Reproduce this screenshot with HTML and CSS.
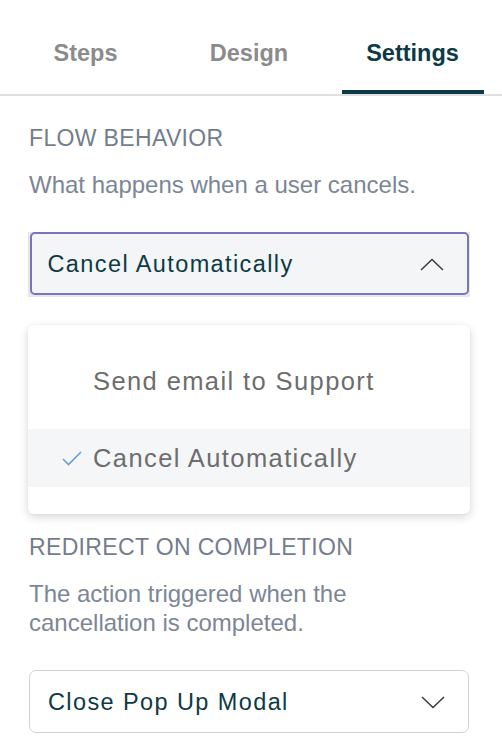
FILE: index.html
```html
<!DOCTYPE html>
<html lang="en">
<head>
<meta charset="utf-8">
<title>Settings</title>
<link rel="stylesheet" href="styles.css">
</head>
<body>
<div class="panel">
  <nav class="tabs">
    <div class="tab">Steps</div>
    <div class="tab">Design</div>
    <div class="tab active">Settings</div>
  </nav>
  <div class="content">
    <section class="section">
      <h2 class="label">FLOW BEHAVIOR</h2>
      <p class="desc">What happens when a user cancels.</p>
      <div class="select-wrap">
        <div class="select open">
          <span class="select-text">Cancel Automatically</span>
          <svg class="chev" width="24" height="13" viewBox="0 0 24 13"><path d="M1 12 L12 1.5 L23 12" fill="none" stroke="#3a3a3a" stroke-width="1.5"/></svg>
        </div>
      </div>
      <ul class="menu">
        <li class="item first">Send email to Support</li>
        <li class="item selected">
          <svg class="check" width="20" height="15" viewBox="0 0 20 15"><path d="M1 8 L6.5 13.5 L19 1" fill="none" stroke="#6a9fcf" stroke-width="1.6"/></svg>
          Cancel Automatically
        </li>
      </ul>
    </section>
    <section class="section second">
      <h2 class="label">REDIRECT ON COMPLETION</h2>
      <p class="desc">The action triggered when the cancellation is completed.</p>
      <div class="select plain">
        <span class="select-text">Close Pop Up Modal</span>
        <svg class="chev" width="24" height="13" viewBox="0 0 24 13"><path d="M1 1 L12 11.5 L23 1" fill="none" stroke="#3a3a3a" stroke-width="1.5"/></svg>
      </div>
    </section>
  </div>
</div>
</body>
</html>
```
FILE: styles.css
```css
* { box-sizing: border-box; }
html, body { margin: 0; padding: 0; background: #ffffff; }
body { font-family: "Liberation Sans", Arial, Helvetica, sans-serif; }

.panel { width: 502px; }

.tabs {
  display: flex;
  gap: 21.5px;
  padding-left: 14.5px;
  border-bottom: 2px solid #e0e0e0;
}
.tab {
  width: 142px;
  text-align: center;
  font-size: 23.5px;
  font-weight: bold;
  line-height: 28px;
  padding: 39px 0 23px;
  color: #8b8b8b;
  border-bottom: 4px solid transparent;
}
.tab.active {
  color: #0d3a46;
  border-bottom-color: #0c3a47;
}

.content { padding: 0 32px 0 28px; }

.section { padding-top: 28px; }
.section.second { padding-top: 19px; }

.label {
  margin: 0 0 18px 1px;
  font-size: 23px;
  font-weight: normal;
  line-height: 28px;
  letter-spacing: 0.35px;
  color: #737d8c;
}
.desc {
  margin: 0 0 33px 1px;
  font-size: 24px;
  line-height: 29px;
  color: #7c8695;
}

.select-wrap {
  background: #e6e7ea;
  padding: 0 1.5px 2px;
}
.select {
  display: flex;
  align-items: center;
  justify-content: space-between;
  height: 63px;
  padding: 1px 23px 0 16px;
  border-radius: 5px;
}
.select.open {
  background: #f4f5f7;
  border: 2px solid #7b74b8;
}
.select.plain {
  margin: 0 1px;
  background: #ffffff;
  border: 1.5px solid #d2d2d2;
  border-radius: 7px;
  padding-left: 18px;
}
.select-text {
  font-size: 23.5px;
  letter-spacing: 1.4px;
  color: #0c3a45;
}
.chev { display: block; }

.menu {
  list-style: none;
  margin: 28px 0 0;
  padding: 27px 0 27px;
  background: #ffffff;
  border-radius: 6px;
  box-shadow: 0 3px 10px rgba(0, 0, 0, 0.16), 0 0 2px rgba(0, 0, 0, 0.06);
}
.item {
  position: relative;
  height: 58px;
  line-height: 58px;
  padding-left: 65px;
  font-size: 25.5px;
  letter-spacing: 1.4px;
  color: #6d6d6d;
}
.item.first { margin-bottom: 19px; }
.item.selected { background: #f5f6f8; }
.check {
  position: absolute;
  left: 34px;
  top: 22px;
}
```
